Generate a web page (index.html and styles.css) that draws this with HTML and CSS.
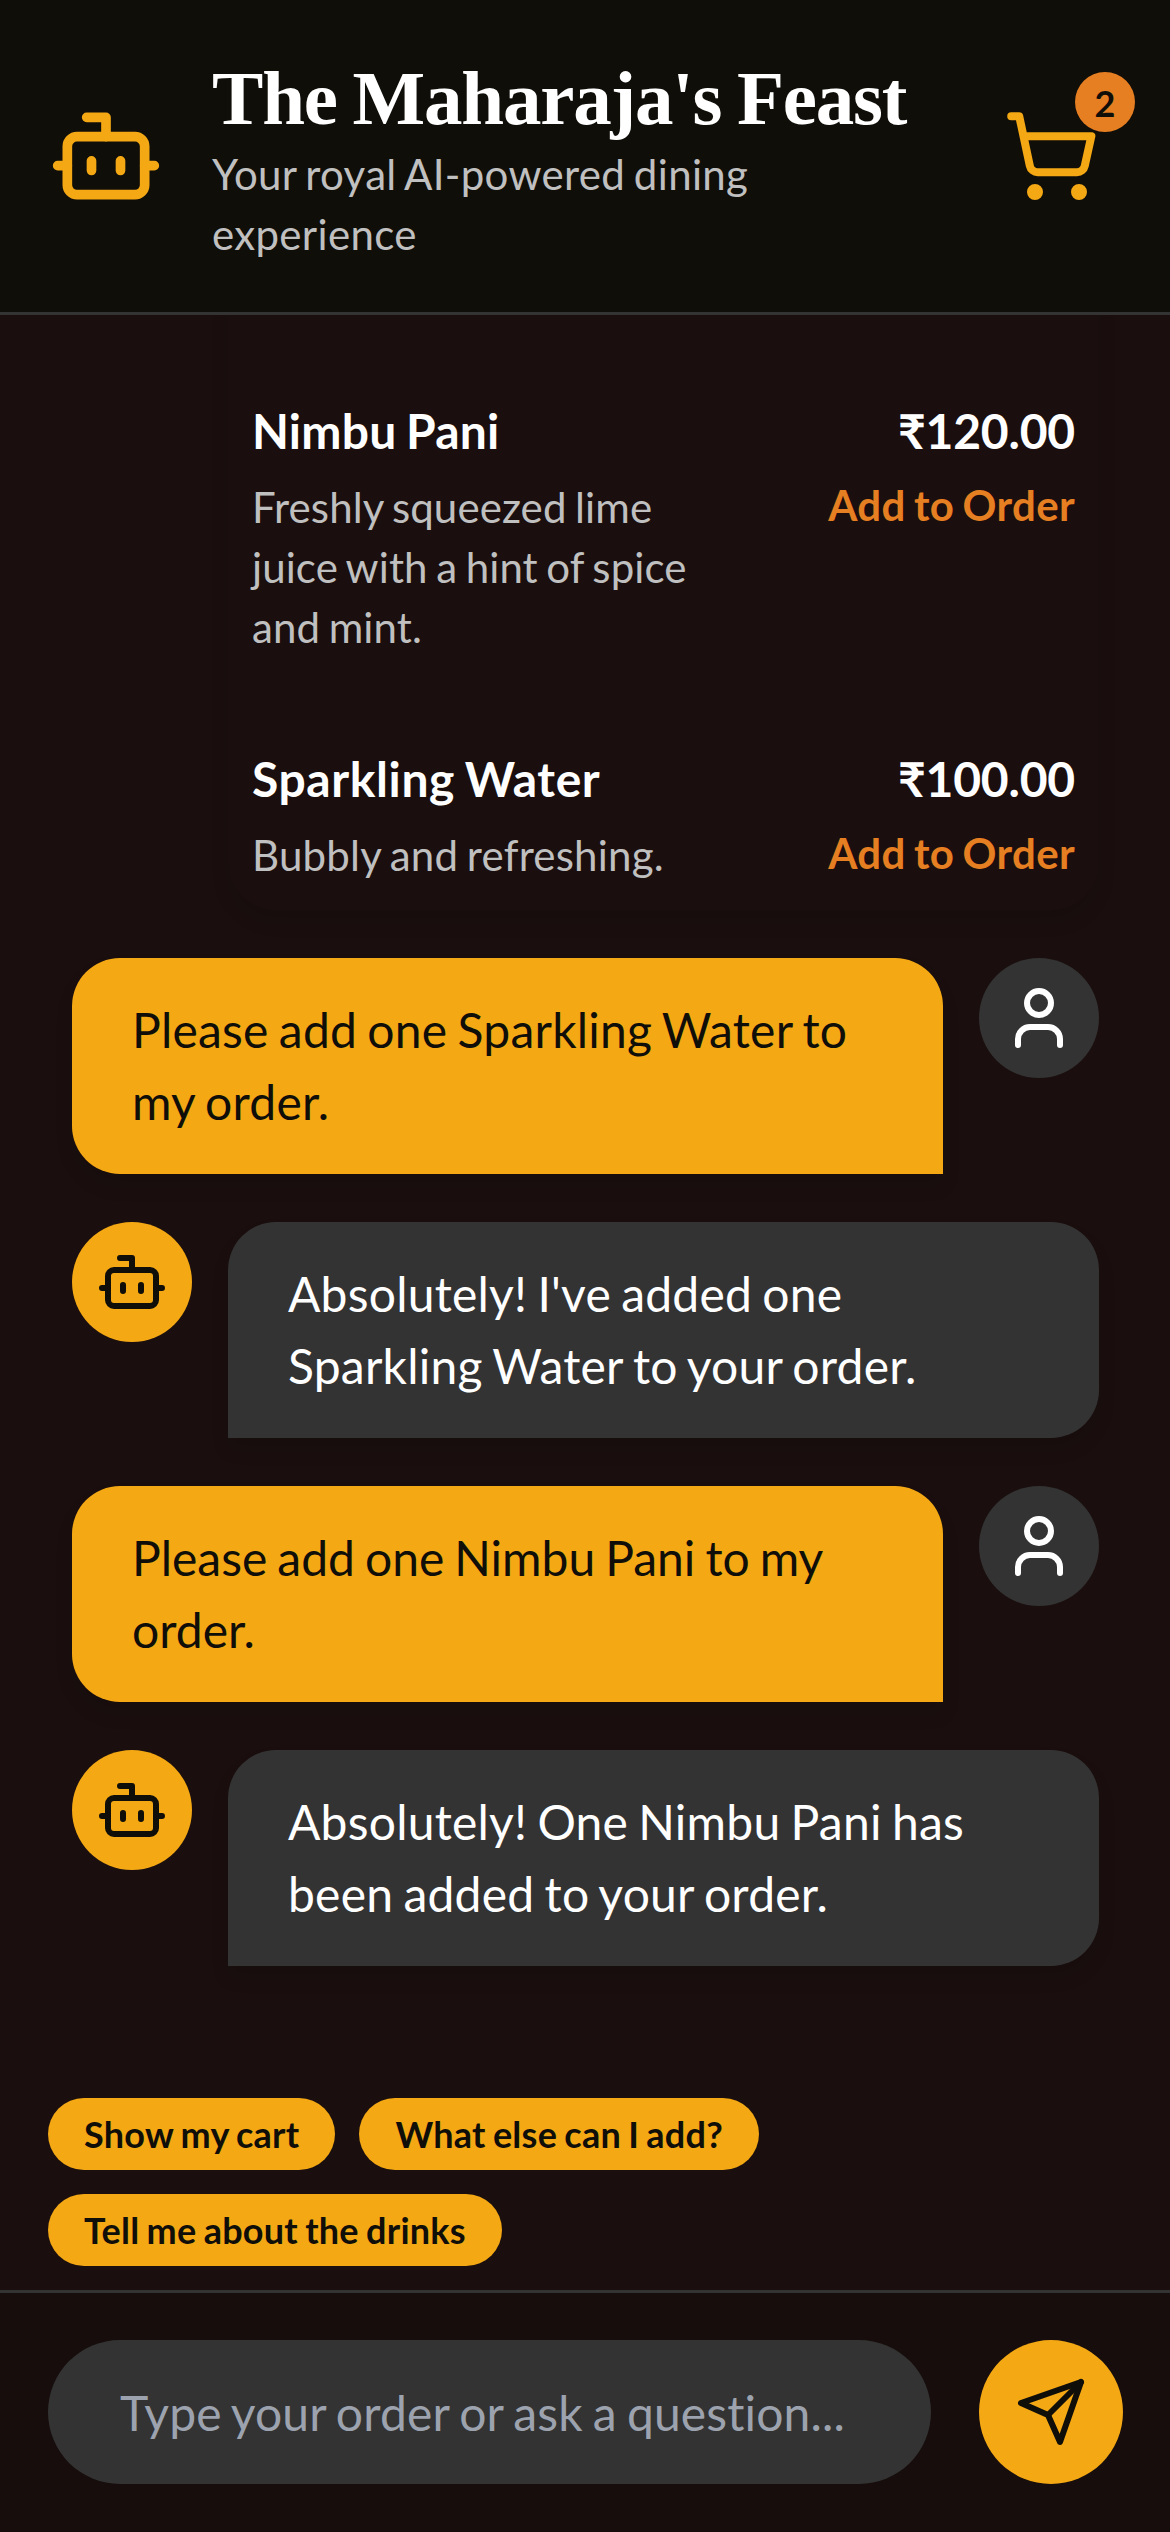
FILE: index.html
```html
<!DOCTYPE html>
<html lang="en">
<head>
<meta charset="utf-8">
<title>The Maharaja's Feast</title>
<link rel="stylesheet" href="styles.css">
</head>
<body>
<svg class="sprite" aria-hidden="true">
  <symbol id="bot" viewBox="0 0 24 24"><path d="M12 8V4H8"/><rect width="16" height="12" x="4" y="8" rx="2"/><path d="M2 14h2M20 14h2M15 13v2M9 13v2"/></symbol>
  <symbol id="user" viewBox="0 0 24 24"><path d="M19 21v-2a4 4 0 0 0-4-4H9a4 4 0 0 0-4 4v2"/><circle cx="12" cy="7" r="4"/></symbol>
</svg>
<div class="app">
  <header class="header">
    <svg class="icon logo"><use href="#bot"/></svg>
    <div class="brand">
      <h1 class="title">The Maharaja's Feast</h1>
      <p class="tagline">Your royal AI-powered dining experience</p>
    </div>
    <button class="cart" aria-label="Cart">
      <svg class="icon cart-icon" viewBox="0 0 24 24"><circle cx="8" cy="21" r="1"/><circle cx="19" cy="21" r="1"/><path d="M2.05 2.05h2l2.66 12.42a2 2 0 0 0 2 1.58h9.78a2 2 0 0 0 1.95-1.57l1.65-7.43H5.12"/></svg>
      <span class="badge">2</span>
    </button>
  </header>

  <main class="chat">
    <section class="menu">
      <article class="item">
        <div class="info">
          <h2 class="name">Nimbu Pani</h2>
          <p class="desc">Freshly squeezed lime juice with a hint of spice and mint.</p>
        </div>
        <div class="buy">
          <span class="price">₹120.00</span>
          <button class="add">Add to Order</button>
        </div>
      </article>
      <article class="item">
        <div class="info">
          <h2 class="name looser">Sparkling Water</h2>
          <p class="desc loose">Bubbly and refreshing.</p>
        </div>
        <div class="buy">
          <span class="price">₹100.00</span>
          <button class="add">Add to Order</button>
        </div>
      </article>
    </section>

    <div class="message">
      <p class="bubble bubble-user loose">Please add one Sparkling Water to my order.</p>
      <span class="avatar avatar-user"><svg class="icon small"><use href="#user"/></svg></span>
    </div>
    <div class="message">
      <span class="avatar avatar-bot"><svg class="icon small"><use href="#bot"/></svg></span>
      <p class="bubble bubble-bot loose">Absolutely! I've added one Sparkling Water to your order.</p>
    </div>
    <div class="message">
      <p class="bubble bubble-user">Please add one Nimbu Pani to my order.</p>
      <span class="avatar avatar-user"><svg class="icon small"><use href="#user"/></svg></span>
    </div>
    <div class="message">
      <span class="avatar avatar-bot"><svg class="icon small"><use href="#bot"/></svg></span>
      <p class="bubble bubble-bot loose">Absolutely! One Nimbu Pani has been added to your order.</p>
    </div>
  </main>

  <nav class="chips">
    <button class="chip">Show my cart</button>
    <button class="chip">What else can I add?</button>
    <button class="chip">Tell me about the drinks</button>
  </nav>

  <footer class="composer">
    <input class="field" type="text" placeholder="Type your order or ask a question...">
    <button class="send" aria-label="Send"><svg class="icon small" viewBox="0 0 24 24"><path d="m22 2-7 20-4-9-9-4Z"/><path d="M22 2 11 13"/></svg></button>
  </footer>
</div>
</body>
</html>
```
FILE: styles.css
```css
* { box-sizing: border-box; margin: 0; padding: 0; }

body {
  overflow: hidden;
  background: #1a0f0e;
  color: #fff;
  font: 48px/72px Lato, "Noto Sans", sans-serif;
  font-variant-ligatures: none;
  word-spacing: -2.3px;
}

button, input {
  border: 0;
  background: none;
  color: inherit;
  font: inherit;
  font-variant-ligatures: none;
  word-spacing: inherit;
}

.sprite { display: none; }

.icon {
  flex: none;
  fill: none;
  stroke: currentColor;
  stroke-width: 2;
  stroke-linecap: round;
  stroke-linejoin: round;
}
.small { width: 72px; height: 72px; }

.app {
  display: flex;
  flex-direction: column;
  width: 1171px;
  height: 2532px;
}

.header {
  display: flex;
  align-items: center;
  gap: 48px;
  height: 315px;
  padding: 48px;
  border-bottom: 3px solid #333;
  background: #100e09;
}
.logo { width: 116px; height: 120px; color: #f4a814; }
.brand { width: 695px; }
.title {
  height: 96px;
  font: bold 77px/100px "Liberation Serif", serif;
  letter-spacing: -1.2px;
  white-space: nowrap;
}
.tagline { font-size: 42px; line-height: 60px; letter-spacing: .33px; color: #c0c0c0; }
.cart {
  position: relative;
  display: flex;
  margin-left: auto;
  padding: 24px;
  color: #f4a814;
}
.cart-icon { width: 96px; height: 96px; }
.badge {
  position: absolute;
  top: -12px;
  right: -12px;
  width: 60px;
  height: 60px;
  border-radius: 50%;
  background: #e67e22;
  color: #100e09;
  font-size: 36px;
  font-weight: 700;
  line-height: 62px;
  text-align: center;
}

.chat {
  display: flex;
  flex: 1;
  flex-direction: column;
  justify-content: flex-end;
  gap: 48px;
  min-height: 0;
  padding: 0 72px 108px;
  overflow: hidden;
}

.menu {
  display: flex;
  flex-direction: column;
  gap: 85px;
  margin-left: 156px;
  padding: 160px 24px 25px;
  border-radius: 0 0 48px 48px;
  box-shadow: 0 12px 18px rgba(0, 0, 0, .1);
}
.item { display: flex; justify-content: space-between; }
.info { width: 450px; }
.name { font-size: 48px; font-weight: 700; line-height: 73px; letter-spacing: .22px; }
.desc { margin-top: 10px; font-size: 42px; line-height: 60px; letter-spacing: .1px; color: #c0c0c0; }
.buy { display: flex; flex-direction: column; align-items: flex-end; }
.price { font-weight: 700; line-height: 73px; letter-spacing: -.2px; }
.add {
  margin-top: 8px;
  font-size: 42px;
  font-weight: 700;
  line-height: 60px;
  letter-spacing: .37px;
  color: #e67e22;
}

.message { display: flex; gap: 36px; }
.bubble {
  flex: 1;
  padding: 36px 60px;
  border-radius: 48px;
  box-shadow: 0 12px 18px rgba(0, 0, 0, .1);
}
.bubble-user { border-bottom-right-radius: 0; background: #f4a814; color: #100e09; }
.bubble-bot { border-bottom-left-radius: 0; background: #333; }
.avatar {
  display: flex;
  flex: none;
  align-items: center;
  justify-content: center;
  width: 120px;
  height: 120px;
  border-radius: 50%;
}
.avatar-user { background: #333; }
.avatar-bot { background: #f4a814; color: #100e09; }

.loose { letter-spacing: .22px; }
.looser { letter-spacing: .6px; }

.chips { display: flex; flex-wrap: wrap; gap: 24px; padding: 24px 48px; }
.chip {
  padding: 12px 36px;
  border-radius: 36px;
  background: #f4a814;
  color: #100e09;
  font-size: 36px;
  font-weight: 700;
  line-height: 48px;
  letter-spacing: .25px;
  word-spacing: -1.8px;
}

.composer {
  display: flex;
  gap: 48px;
  padding: 47.5px 48px 48px;
  border-top: 3px solid #333;
  background: #160d0c;
}
.field {
  flex: 1;
  min-width: 0;
  height: 144px;
  padding: 0 72px;
  border-radius: 72px;
  background: #333;
  letter-spacing: .14px;
}
.field::placeholder { color: #9ca3af; opacity: 1; }
.send {
  display: flex;
  align-items: center;
  justify-content: center;
  width: 144px;
  height: 144px;
  border-radius: 50%;
  background: #f4a814;
  color: #100e09;
}
```
